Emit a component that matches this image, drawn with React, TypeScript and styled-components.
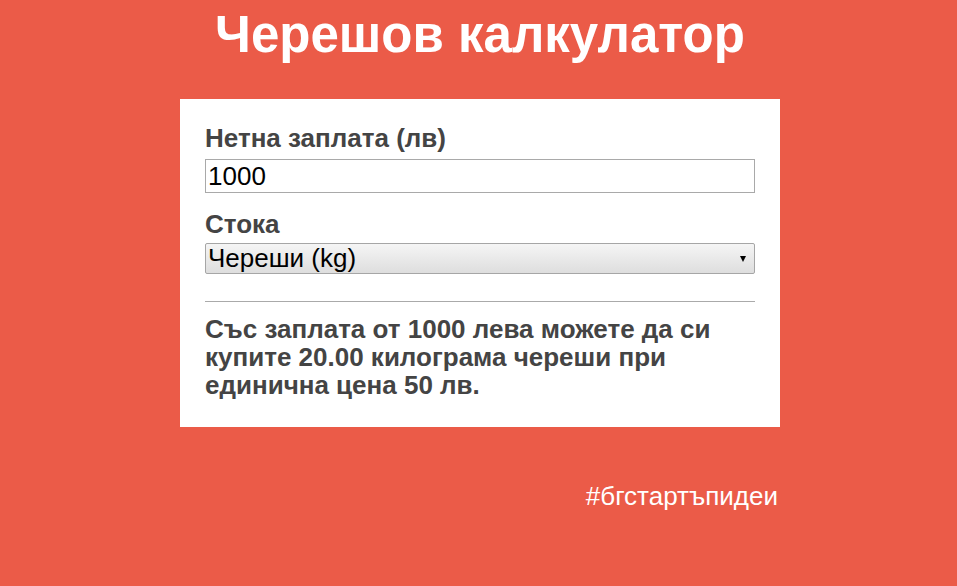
import React from "react";
import styled, { createGlobalStyle } from "styled-components";

const Global = createGlobalStyle`
  html, body { margin: 0; padding: 0; background: #eb5b48; }
  body { font-family: "Liberation Sans", Arial, sans-serif; }
`;

const Page = styled.div`
  width: 600px;
  margin: 0 auto;
  padding-left: 3px;
  display: flex;
  flex-direction: column;
`;

const Title = styled.h1`
  margin: 5px 0 0;
  height: 94px;
  text-align: center;
  color: #fff;
  font-size: 51px;
  line-height: 60px;
  font-weight: bold;
`;

const Card = styled.div`
  background: #fff;
  padding: 24px 25px 28px;
  display: flex;
  flex-direction: column;
`;

const Label = styled.label<{ $gap: number }>`
  display: block;
  color: #444;
  font-size: 26px;
  font-weight: bold;
  line-height: 30px;
  margin-bottom: ${(p) => p.$gap}px;
`;

const Field = styled.div<{ $after: number }>`
  display: flex;
  flex-direction: column;
  margin-bottom: ${(p) => p.$after}px;
`;

const Input = styled.input`
  box-sizing: border-box;
  width: 100%;
  height: 34px;
  border: 1px solid #a9a9a9;
  padding: 0 2px;
  font-family: "Liberation Sans", Arial, sans-serif;
  font-size: 26px;
  color: #000;
  outline: none;
`;

const SelectBox = styled.div`
  position: relative;
  box-sizing: border-box;
  height: 31px;
  border: 1px solid #a6a6a6;
  border-radius: 2px;
  background: linear-gradient(#f5f5f5, #dedede);
  display: flex;
  align-items: center;
  padding: 0 2px;
  font-size: 26px;
  color: #000;
`;

const Caret = styled.span`
  position: absolute;
  right: 8px;
  top: 12px;
  width: 0;
  height: 0;
  border-left: 3px solid transparent;
  border-right: 3px solid transparent;
  border-top: 6px solid #000;
`;

const Rule = styled.hr`
  margin: 0 0 13px;
  border: 0;
  border-top: 1px solid #aaa;
`;

const Result = styled.p`
  margin: 0;
  color: #444;
  font-size: 26px;
  font-weight: bold;
  line-height: 28px;
`;

const Footer = styled.div`
  margin-top: 54px;
  text-align: right;
  color: #fff;
  font-size: 26px;
  line-height: 30px;
  padding-right: 2px;
`;

export default function App() {
  return (
    <>
      <Global />
      <Page>
        <Title>Черешов калкулатор</Title>
        <Card>
          <Field $after={16}>
            <Label $gap={6}>Нетна заплата (лв)</Label>
            <Input defaultValue="1000" />
          </Field>
          <Field $after={27}>
            <Label $gap={4}>Стока</Label>
            <SelectBox>
              Череши (kg)
              <Caret />
            </SelectBox>
          </Field>
          <Rule />
          <Result>
            Със заплата от 1000 лева можете да си купите 20.00 килограма череши при единична цена 50 лв.
          </Result>
        </Card>
        <Footer>#бгстартъпидеи</Footer>
      </Page>
    </>
  );
}
